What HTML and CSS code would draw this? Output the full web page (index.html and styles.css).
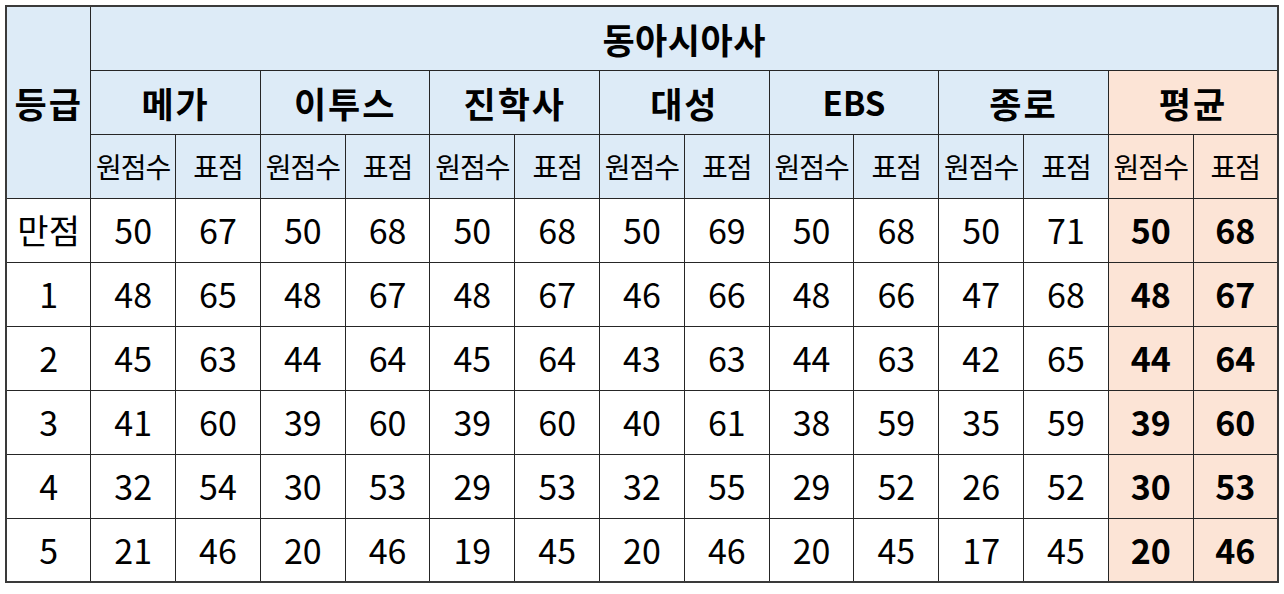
FILE: index.html
```html
<!DOCTYPE html>
<html lang="ko">
<head>
<meta charset="utf-8">
<title>동아시아사 등급컷</title>
<link rel="stylesheet" href="styles.css">
</head>
<body>
<table class="grade-table">
  <colgroup>
    <col><col><col><col><col><col><col><col><col><col><col><col><col><col><col>
  </colgroup>
  <thead>
    <tr>
      <th class="hd blue big" rowspan="3">등급</th>
      <th class="hd blue big title" colspan="14">동아시아사</th>
    </tr>
    <tr>
      <th class="hd blue big" colspan="2">메가</th>
      <th class="hd blue big" colspan="2">이투스</th>
      <th class="hd blue big" colspan="2">진학사</th>
      <th class="hd blue big" colspan="2">대성</th>
      <th class="hd blue big latin" colspan="2">EBS</th>
      <th class="hd blue big" colspan="2">종로</th>
      <th class="hd peach big" colspan="2">평균</th>
    </tr>
    <tr>
      <th class="hd blue sub">원점수</th><th class="hd blue sub">표점</th>
      <th class="hd blue sub">원점수</th><th class="hd blue sub">표점</th>
      <th class="hd blue sub">원점수</th><th class="hd blue sub">표점</th>
      <th class="hd blue sub">원점수</th><th class="hd blue sub">표점</th>
      <th class="hd blue sub">원점수</th><th class="hd blue sub">표점</th>
      <th class="hd blue sub">원점수</th><th class="hd blue sub">표점</th>
      <th class="hd peach sub">원점수</th><th class="hd peach sub">표점</th>
    </tr>
  </thead>
  <tbody>
    <tr>
      <td class="grade">만점</td>
      <td>50</td><td>67</td><td>50</td><td>68</td><td>50</td><td>68</td><td>50</td><td>69</td><td>50</td><td>68</td><td>50</td><td>71</td>
      <td class="avg">50</td><td class="avg">68</td>
    </tr>
    <tr>
      <td class="grade">1</td>
      <td>48</td><td>65</td><td>48</td><td>67</td><td>48</td><td>67</td><td>46</td><td>66</td><td>48</td><td>66</td><td>47</td><td>68</td>
      <td class="avg">48</td><td class="avg">67</td>
    </tr>
    <tr>
      <td class="grade">2</td>
      <td>45</td><td>63</td><td>44</td><td>64</td><td>45</td><td>64</td><td>43</td><td>63</td><td>44</td><td>63</td><td>42</td><td>65</td>
      <td class="avg">44</td><td class="avg">64</td>
    </tr>
    <tr>
      <td class="grade">3</td>
      <td>41</td><td>60</td><td>39</td><td>60</td><td>39</td><td>60</td><td>40</td><td>61</td><td>38</td><td>59</td><td>35</td><td>59</td>
      <td class="avg">39</td><td class="avg">60</td>
    </tr>
    <tr>
      <td class="grade">4</td>
      <td>32</td><td>54</td><td>30</td><td>53</td><td>29</td><td>53</td><td>32</td><td>55</td><td>29</td><td>52</td><td>26</td><td>52</td>
      <td class="avg">30</td><td class="avg">53</td>
    </tr>
    <tr>
      <td class="grade">5</td>
      <td>21</td><td>46</td><td>20</td><td>46</td><td>19</td><td>45</td><td>20</td><td>46</td><td>20</td><td>45</td><td>17</td><td>45</td>
      <td class="avg">20</td><td class="avg">46</td>
    </tr>
  </tbody>
</table>
</body>
</html>
```
FILE: styles.css
```css
html, body {
  margin: 0;
  padding: 0;
  background: #ffffff;
}
body {
  padding: 5px 0 0 5px;
  font-family: "Noto Sans CJK KR", "Noto Sans", sans-serif;
  color: #000;
}
.grade-table {
  border-collapse: collapse;
  table-layout: fixed;
  width: 1272px;
  border: 2px solid #3a3a3a;
}
.grade-table col {
  width: 84.8px;
}
.grade-table tr {
  height: 64px;
}
.grade-table th,
.grade-table td {
  border: 1px solid #262626;
  padding: 0;
  text-align: center;
  vertical-align: middle;
  line-height: 1;
  white-space: nowrap;
  overflow: hidden;
}
.grade-table td {
  font-size: 34px;
  font-weight: 400;
}
.blue {
  background: #ddebf7;
}
.peach {
  background: #fce4d6;
}
.big {
  font-size: 35px;
  font-weight: 700;
  letter-spacing: 2px;
}
.title {
  letter-spacing: 0.5px;
}
.latin {
  font-size: 33px;
  letter-spacing: 0;
}
.sub {
  font-size: 28px;
  font-weight: 400;
  letter-spacing: -1px;
}
.grade {
  font-size: 34px;
}
.avg {
  background: #fce4d6;
  font-weight: 700 !important;
}
```
